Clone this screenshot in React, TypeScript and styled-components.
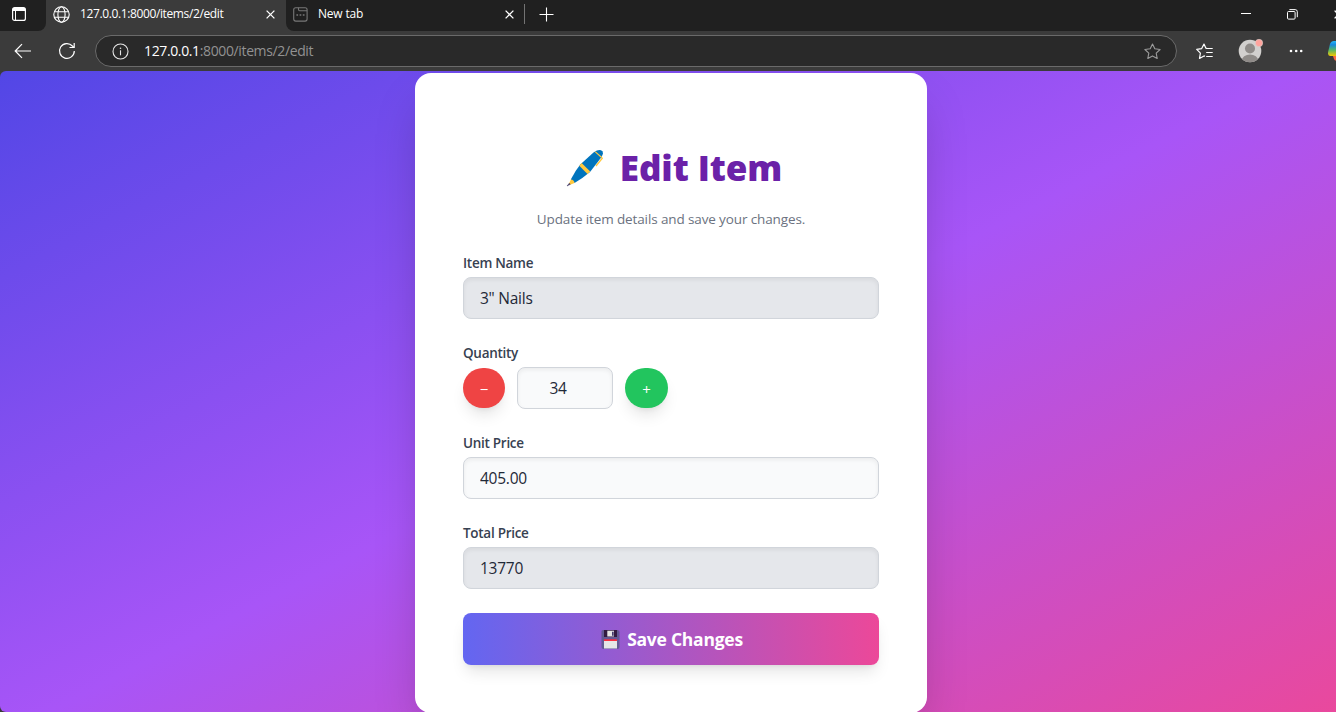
import React, { useState } from 'react';
import styled, { createGlobalStyle } from 'styled-components';

const Global = createGlobalStyle`
  *, *::before, *::after { box-sizing: border-box; }
  html, body { margin: 0; padding: 0; overflow: hidden; }
  body { font-family: "Open Sans", "Noto Sans", sans-serif; background: #3b3b3b; }
  svg { display: block; flex: none; }
  button, input { font: inherit; }
`;

const Window = styled.div`
  width: 1336px;
  height: 712px;
  overflow: hidden;
  display: flex;
  flex-direction: column;
  background: #3b3b3b;
`;

const TabStrip = styled.div`
  display: flex;
  height: 31px;
  flex: none;
  background: #3b3b3b;
  color: #fff;
  overflow: hidden;
`;

const StripStart = styled.div`
  width: 46px;
  padding: 7px 0 0 12px;
  background: #202020;
  border-bottom-right-radius: 8px;
`;

const ActiveTab = styled.div`
  width: 240px;
  display: flex;
  align-items: center;
  padding: 0 11px 3px 7px;
  background: #3b3b3b;
`;

const StripRest = styled.div`
  flex: 1;
  min-width: 0;
  display: flex;
  align-items: center;
  padding: 0 0 3px 7px;
  background: #202020;
  border-bottom-left-radius: 8px;
`;

const TabTitle = styled.span<{ $spacing: number }>`
  flex: 1;
  margin-left: 10px;
  font-size: 12px;
  line-height: 16px;
  white-space: nowrap;
  letter-spacing: ${(p) => p.$spacing}px;
`;

const IdleTab = styled.div`
  width: 221px;
  display: flex;
  align-items: center;
`;

const Divider = styled.i`
  width: 1px;
  height: 20px;
  margin: 0 14px 0 10px;
  background: #737373;
`;

const WindowButtons = styled.div`
  margin-left: auto;
  display: flex;
  align-items: center;
  gap: 36px;
  margin-right: -7px;
`;

const Toolbar = styled.div`
  height: 40px;
  flex: none;
  display: flex;
  align-items: center;
  padding-left: 14px;
  overflow: hidden;
`;

const NavButtons = styled.div`
  display: flex;
  align-items: center;
  flex: none;
  gap: 26px;
`;

const Address = styled.div`
  width: 1082px;
  height: 32px;
  flex: none;
  margin-left: 19px;
  padding: 0 15px 0 16px;
  display: flex;
  align-items: center;
  border: 1px solid #6a6a6a;
  border-radius: 16px;
  background: #292929;
`;

const Url = styled.span`
  flex: 1;
  margin-left: 15px;
  font-size: 14px;
  line-height: 20px;
  letter-spacing: -0.37px;
  color: #929292;
  b { font-weight: 400; color: #fff; }
`;

const Actions = styled.div`
  display: flex;
  align-items: center;
  flex: none;
  margin-left: 19px;
  gap: 25px;
`;

const Viewport = styled.div`
  flex: 1;
  min-height: 0;
  overflow: hidden;
  border-radius: 6px 0 0 6px;
`;

const Page = styled.main`
  width: 1342px;
  height: 688px;
  margin-top: -22px;
  display: flex;
  justify-content: center;
  align-items: center;
  padding: 24px;
  background: linear-gradient(to bottom right, #4f46e5, #a855f7, #ec4899);
`;

const Card = styled.section`
  width: 512px;
  height: 640px;
  flex: none;
  padding: 72px 48px 48px;
  border-radius: 16px;
  background: #fff;
  box-shadow: 0 25px 50px -12px rgba(0, 0, 0, 0.25);
`;

const Heading = styled.h1`
  margin: 0;
  padding-left: 6px;
  height: 45px;
  display: flex;
  justify-content: center;
  align-items: center;
  gap: 16px;
  color: #6b21a8;
  font-size: 35px;
  font-weight: 800;
  line-height: 40px;
  letter-spacing: -0.1px;
  white-space: nowrap;
`;

const Subtitle = styled.p`
  margin: 19px 0 24px;
  text-align: center;
  color: #6b7280;
  font-size: 13.5px;
  line-height: 20px;
  letter-spacing: -0.12px;
`;

const Form = styled.form`
  display: flex;
  flex-direction: column;
  gap: 24px;
`;

const Field = styled.div`
  display: flex;
  flex-direction: column;
  gap: 4px;
`;

const Label = styled.label`
  color: #374151;
  font-size: 13.5px;
  font-weight: 600;
  line-height: 20px;
  letter-spacing: -0.28px;
`;

const Input = styled.input<{ $locked?: boolean; $compact?: boolean }>`
  width: ${(p) => (p.$compact ? '96px' : '100%')};
  height: 42px;
  padding: ${(p) => (p.$compact ? '0 16px 0 2px' : '0 16px')};
  text-align: ${(p) => (p.$compact ? 'center' : 'left')};
  border: 1px solid #d1d5db;
  border-radius: 8px;
  outline: none;
  background: ${(p) => (p.$locked ? '#e5e7eb' : '#f9fafb')};
  box-shadow: inset 0 2px 4px rgba(0, 0, 0, 0.06);
  color: #1f2937;
  font-size: 15.5px;
  line-height: 24px;
  letter-spacing: -0.25px;
`;

const Stepper = styled.div`
  display: flex;
  align-items: center;
  gap: 12px;
`;

const RoundButton = styled.button<{ $tone: string; $width: number }>`
  width: ${(p) => p.$width}px;
  height: 40px;
  padding: 1px 0 0;
  border: 0;
  border-radius: 9999px;
  color: #fff;
  background: ${(p) => p.$tone};
  font-size: 15px;
  box-shadow: 0 10px 15px -3px rgba(0, 0, 0, 0.1), 0 4px 6px -4px rgba(0, 0, 0, 0.1);
`;

const SaveButton = styled.button`
  height: 52px;
  padding: 0 4px 0 6px;
  border: 0;
  border-radius: 8px;
  display: flex;
  align-items: center;
  justify-content: center;
  gap: 7px;
  color: #fff;
  background: linear-gradient(to right, #6366f1, #ec4899);
  box-shadow: 0 10px 15px -3px rgba(0, 0, 0, 0.1), 0 4px 6px -4px rgba(0, 0, 0, 0.1);
  font-size: 17.5px;
  font-weight: 700;
  letter-spacing: -0.25px;
`;

const CloseIcon = () => (
  <svg width="9" height="9" viewBox="0 0 9 9" stroke="#fff" strokeWidth="1.3">
    <path d="M.6.6l7.8 7.8M8.4.6.6 8.4" />
  </svg>
);

const TabActionsIcon = () => (
  <svg width="14" height="14" viewBox="0 0 14 14" fill="none" stroke="#fff">
    <rect x=".6" y=".6" width="12.8" height="12.8" rx="2" strokeWidth="1.2" />
    <path d="M1 2.5h12" strokeWidth="3" />
    <path d="M3.5 4v9" strokeWidth="1" />
  </svg>
);

const GlobeIcon = () => (
  <svg width="17" height="17" viewBox="0 0 17 17" fill="none" stroke="#fff" strokeWidth="1.1">
    <circle cx="8.5" cy="8.5" r="7.7" />
    <ellipse cx="8.5" cy="8.5" rx="3.6" ry="7.7" />
    <path d="M1.5 5.7h14M1.5 11.3h14" />
  </svg>
);

const NewTabIcon = () => (
  <svg width="15" height="15" viewBox="0 0 15 15" fill="none" stroke="#777" strokeWidth="1.1">
    <rect x=".7" y=".7" width="13.4" height="13.4" rx="2" />
    <path d="M5.5.8v1.7q0 1.2 1.2 1.2H14" />
    <path d="M3.4 8h1.7M6.6 8h1.7M9.8 8h1.7" strokeWidth="1.6" />
  </svg>
);

const PlusIcon = () => (
  <svg width="15" height="15" viewBox="0 0 15 15" stroke="#fff" strokeWidth="1.1">
    <path d="M7.5.5v14M.5 7.5h14" />
  </svg>
);

const MinimizeIcon = () => (
  <svg width="10" height="10" viewBox="0 0 10 10" stroke="#fff">
    <path d="M0 4.5h10" />
  </svg>
);

const RestoreIcon = () => (
  <svg width="11" height="11" viewBox="0 0 11 11" fill="none" stroke="#fff">
    <rect x=".5" y="2.5" width="7.6" height="7.6" rx="1" />
    <path d="M2.4.6h5.8q2.1 0 2.1 2.1v5.5" />
  </svg>
);

const BackIcon = () => (
  <svg width="18" height="16" viewBox="0 0 18 16" fill="none" stroke="#fff" strokeWidth="1.2">
    <path d="M17 8H1.4M8 1.2 1.2 8 8 14.8" />
  </svg>
);

const ReloadIcon = () => (
  <svg width="18" height="18" viewBox="0 0 18 18" fill="none" stroke="#fff" strokeWidth="1.2">
    <path d="M16.3 9A7.4 7.4 0 1 1 14.4 4L16 5.5" />
    <path d="M16.2 1V5.5h-4.7" />
  </svg>
);

const InfoIcon = () => (
  <svg width="17" height="17" viewBox="0 0 17 17" fill="none" stroke="#e6e6e6" strokeWidth="1.1">
    <circle cx="8.5" cy="8.5" r="7.5" />
    <path d="M8.5 7.3v5" />
    <circle cx="8.5" cy="5.2" r=".8" fill="#e6e6e6" stroke="none" />
  </svg>
);

const StarIcon = () => (
  <svg width="17" height="17" viewBox="0 0 17 17" fill="none" stroke="#9b9b9b" strokeWidth="1.1" strokeLinejoin="round">
    <path d="M8.5 1l2.3 4.8 5.3.7-3.9 3.7 1 5.3-4.7-2.6-4.7 2.6 1-5.3L.9 6.5l5.3-.7z" />
  </svg>
);

const FavoritesIcon = () => (
  <svg width="17" height="17" viewBox="0 0 17 17" fill="none" stroke="#fff" strokeWidth="1.2" strokeLinejoin="round">
    <path d="M11 5.4 9.9 5.2 8 1 5.7 5.6l-5 .8 3.7 3.7-.9 5.3 4.5-2.5 1 .4" />
    <path d="M10.2 5.5h6.5M10.2 9.5h6.5M10.2 13.5h6.5" />
  </svg>
);

const AvatarIcon = () => (
  <svg width="26" height="26" viewBox="0 0 26 26">
    <defs>
      <clipPath id="avatar"><circle cx="12" cy="13" r="11.3" /></clipPath>
    </defs>
    <circle cx="12" cy="13" r="11.3" fill="#d2d0ce" />
    <g clipPath="url(#avatar)" fill="#8f8b88">
      <circle cx="12" cy="10.5" r="5" />
      <ellipse cx="12" cy="22.5" rx="8.2" ry="6" />
    </g>
    <circle cx="21" cy="5" r="3.7" fill="#ffa39c" stroke="#d8d0cd" strokeWidth=".6" />
  </svg>
);

const MoreIcon = () => (
  <svg width="14" height="4" viewBox="0 0 14 4" fill="#fff">
    <circle cx="2" cy="2" r="1.3" /><circle cx="7.2" cy="2" r="1.3" /><circle cx="12.2" cy="2" r="1.3" />
  </svg>
);

const CopilotIcon = () => (
  <svg width="22" height="20" viewBox="0 0 22 20">
    <defs>
      <linearGradient id="copilot" x2="0" y2="1">
        <stop offset="0" stopColor="#27b7f5" />
        <stop offset=".25" stopColor="#1688e0" />
        <stop offset=".6" stopColor="#55b767" />
        <stop offset="1" stopColor="#f5c700" />
      </linearGradient>
    </defs>
    <path d="M6 0h10l-3 15H2Q-.5 15 .1 11L2 3Q3 0 6 0z" fill="url(#copilot)" />
    <path d="M5 15H13l-2 5H9Q7 20 6 18z" fill="#fa6a42" />
  </svg>
);

const PenIcon = () => (
  <svg width="38" height="38" viewBox="0 0 38 38">
    <path d="M34 7 36.3 9.2 30 17" fill="none" stroke="#ffc83d" strokeWidth="1.3" />
    <path d="M27.5 3.5Q33.500-.5 36.300 2.200 38 4.700 35 8.700L24 23Q17 29 8.500 34L4.800 30.500Q9 22 14.500 15.300z" fill="#0074bd" />
    <path d="M29.8 2.4 35.8 7.7 35 8.7 28.700 3z" fill="#ffc83d" />
    <path d="M15.6 14 24.2 22.5 21.5 25 13.3 16.700z" fill="#ffc83d" />
    <path d="M4.9 30.5Q8 30.5 8.5 34L3.5 36 2.7 35.200z" fill="#ffc83d" />
    <path d="M3.3 34.2 4.3 35.3 1 37z" fill="#433b6b" stroke="#433b6b" strokeWidth=".5" />
  </svg>
);

const FloppyIcon = () => (
  <svg width="19" height="19" viewBox="0 0 19 19">
    <path d="M2 0h15l1.500 1.500V17a2 2 0 0 1-2 2h-14a2 2 0 0 1-2-2V1.500A1.500 1.500 0 0 1 2 0z" fill="#635994" />
    <path d="M3 0h13v7H3z" fill="#321b41" />
    <path d="M6.3.7H13V6.500H6.300z" fill="#e6e6e6" />
    <path d="M11 1.700h1.700v4H11z" fill="#433b6b" />
    <path d="M3 9.300h13V11H3z" fill="#f92f40" />
    <path d="M3 11h13v7.500H3z" fill="#e6e6e6" />
  </svg>
);

export default function App() {
  const [quantity, setQuantity] = useState(34);
  const unitPrice = 405;
  return (
    <Window>
      <Global />
      <TabStrip>
        <StripStart><TabActionsIcon /></StripStart>
        <ActiveTab>
          <GlobeIcon />
          <TabTitle $spacing={-0.38}>127.0.0.1:8000/items/2/edit</TabTitle>
          <CloseIcon />
        </ActiveTab>
        <StripRest>
          <IdleTab>
            <NewTabIcon />
            <TabTitle $spacing={-0.2}>New tab</TabTitle>
            <CloseIcon />
          </IdleTab>
          <Divider />
          <PlusIcon />
          <WindowButtons>
            <MinimizeIcon />
            <RestoreIcon />
            <CloseIcon />
          </WindowButtons>
        </StripRest>
      </TabStrip>
      <Toolbar>
        <NavButtons>
          <BackIcon />
          <ReloadIcon />
        </NavButtons>
        <Address>
          <InfoIcon />
          <Url><b>127.0.0.1</b>:8000/items/2/edit</Url>
          <StarIcon />
        </Address>
        <Actions>
          <FavoritesIcon />
          <AvatarIcon />
          <MoreIcon />
          <CopilotIcon />
        </Actions>
      </Toolbar>
      <Viewport>
        <Page>
          <Card>
            <Heading><PenIcon />Edit Item</Heading>
            <Subtitle>Update item details and save your changes.</Subtitle>
            <Form onSubmit={(e) => e.preventDefault()}>
              <Field>
                <Label>Item Name</Label>
                <Input $locked readOnly value={'3" Nails'} />
              </Field>
              <Field>
                <Label>Quantity</Label>
                <Stepper>
                  <RoundButton type="button" $tone="#ef4444" $width={42} onClick={() => setQuantity(quantity - 1)}>−</RoundButton>
                  <Input $compact readOnly value={quantity} />
                  <RoundButton type="button" $tone="#22c55e" $width={43} onClick={() => setQuantity(quantity + 1)}>+</RoundButton>
                </Stepper>
              </Field>
              <Field>
                <Label>Unit Price</Label>
                <Input readOnly value={unitPrice.toFixed(2)} />
              </Field>
              <Field>
                <Label>Total Price</Label>
                <Input $locked readOnly value={quantity * unitPrice} />
              </Field>
              <SaveButton><FloppyIcon />Save Changes</SaveButton>
            </Form>
          </Card>
        </Page>
      </Viewport>
    </Window>
  );
}
